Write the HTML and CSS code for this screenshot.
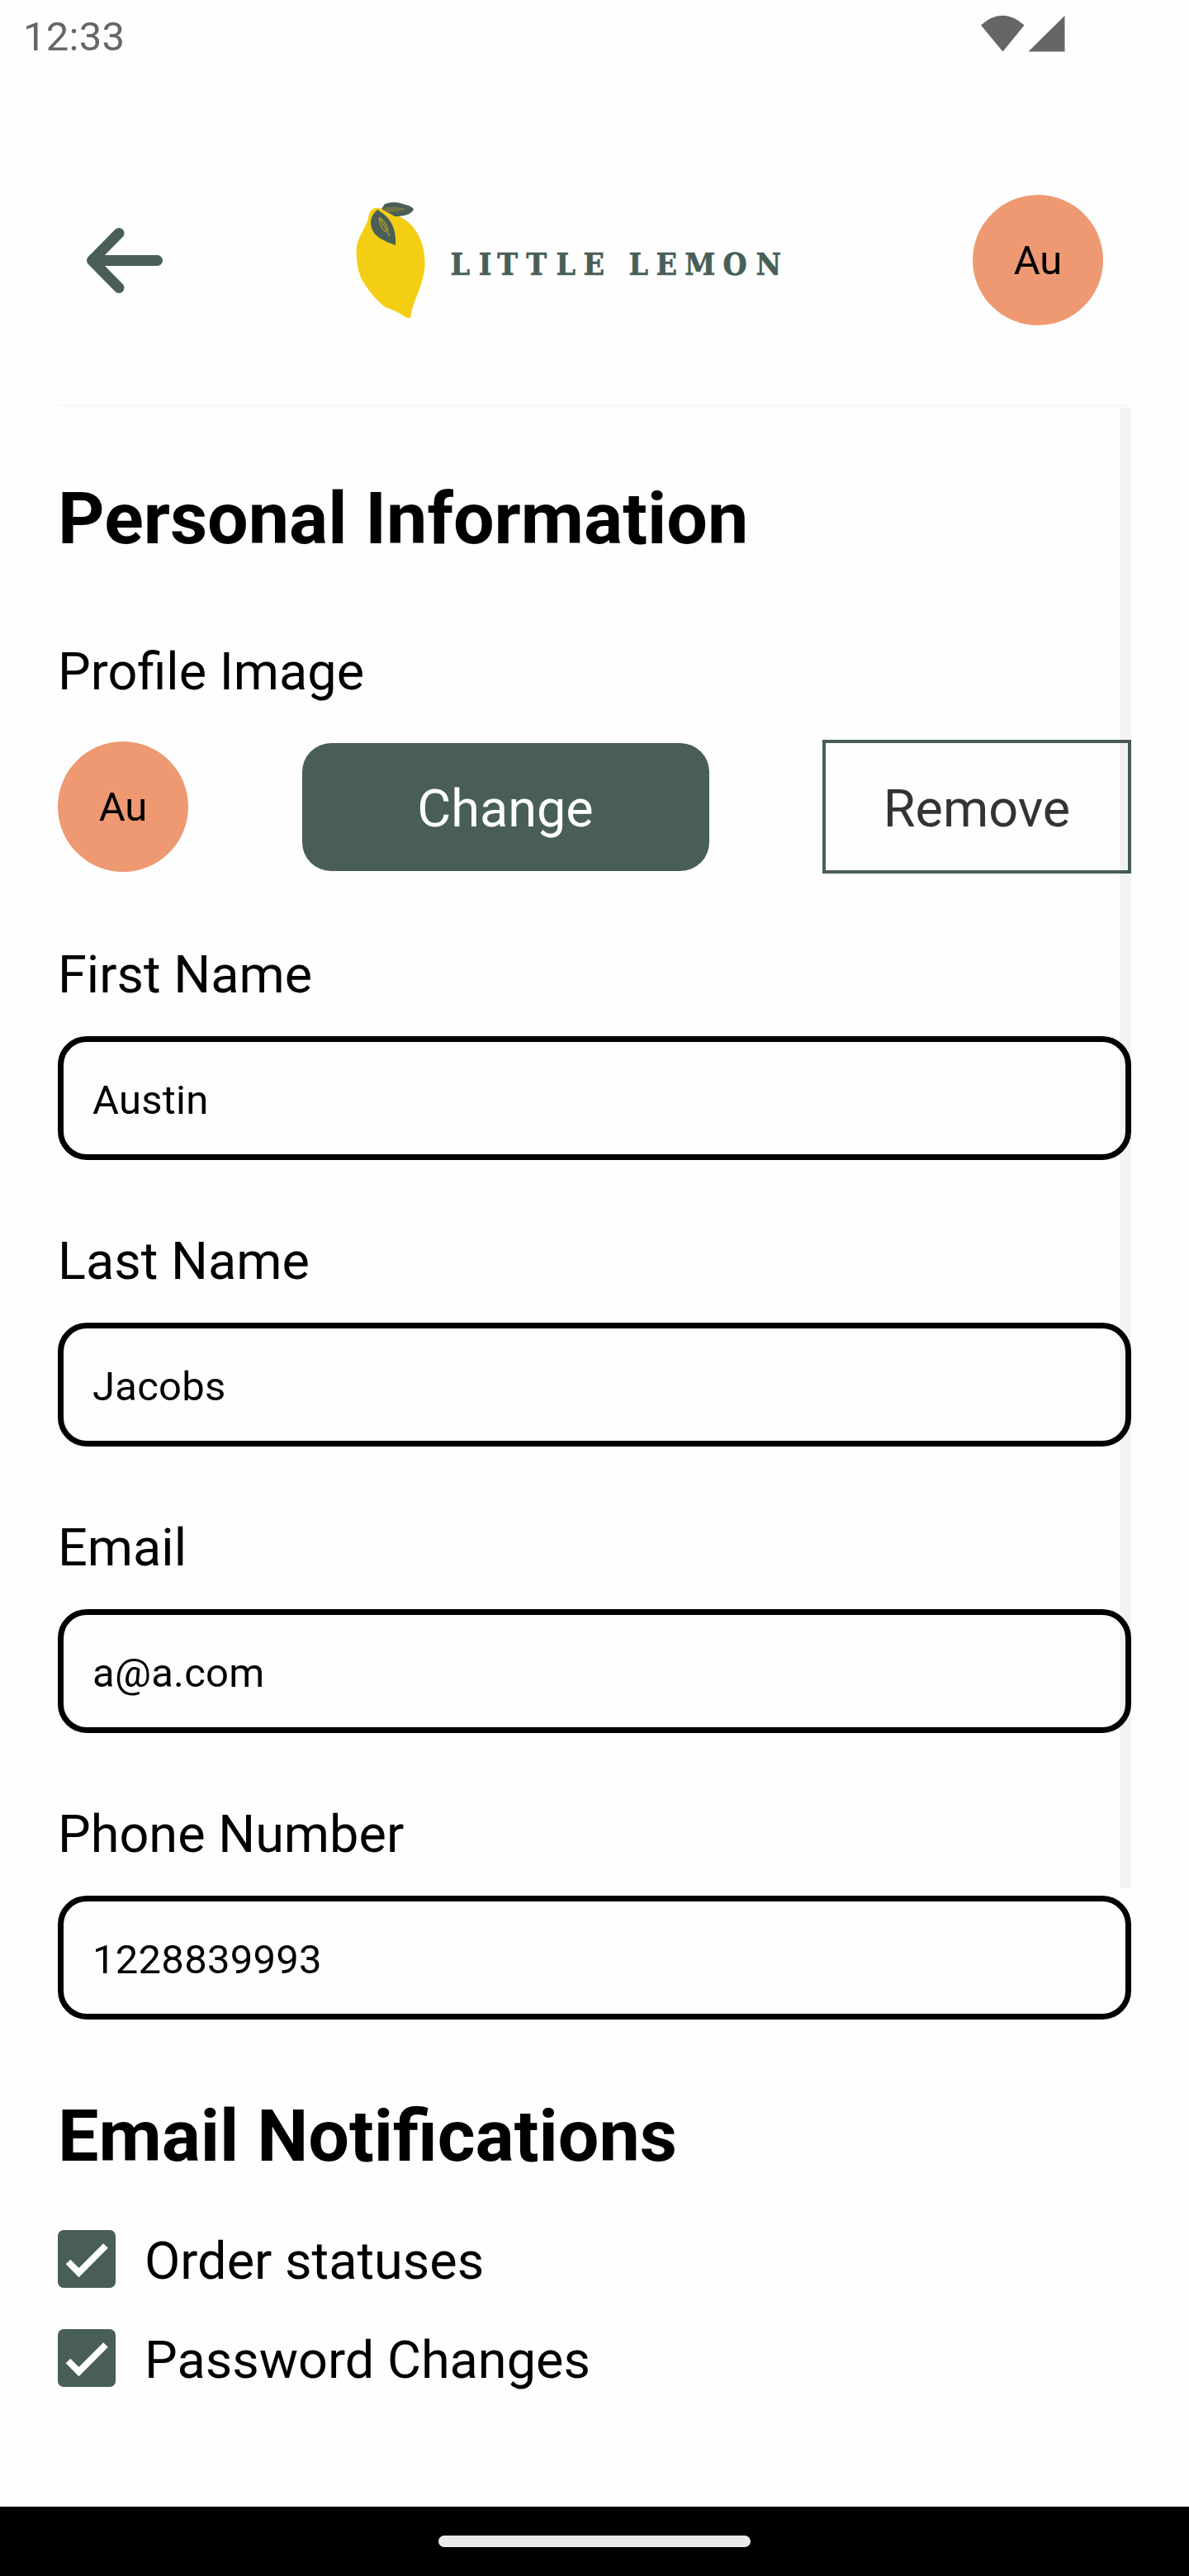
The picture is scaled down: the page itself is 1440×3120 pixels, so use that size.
FILE: index.html
```html
<!DOCTYPE html>
<html lang="en">
<head>
<meta charset="utf-8">
<title>Little Lemon - Profile</title>
<link rel="stylesheet" href="styles.css">
</head>
<body>
<div class="screen">
  <div class="status-bar">
    <span class="clock">12:33</span>
    <svg class="status-icons" width="104" height="46" viewBox="0 0 104 46">
      <path d="M1 12.5Q27 -11 53.500 12.500L27.500 44.500Z"/>
      <path d="M58.500 44.500L102.500 1V44.500Z"/>
    </svg>
  </div>

  <header class="header">
    <svg class="back" width="94" height="80" viewBox="0 0 94 80">
      <path d="M86.500 40.500H8M40 7.500L7.500 40.500L40 73.500"/>
    </svg>
    <svg class="logo" width="516" height="140" viewBox="0 0 516 140">
      <path class="lemon" d="M16 15C17 9 22 6 28 7C44 12 61 19 70 31C80 44 84 59 83.500 78C82 98 72 115 68 130L66 140H61C52 133 46 131 38 128C28 123 13 105 6 91C1 78 0 64 1 53C4 40 11 31 14 23Z"/>
      <path class="leaf" d="M35 2Q47 -2 57 2Q67 4 70 8Q67 17 47 17L31 8Z"/>
      <path class="leaf-shine" d="M31 8Q46 3 60 8Q53 12 40 12Z"/>
      <path class="leaf" d="M26 9C41 18 49 29 48 52C32 46 19 41 18 25Q18 16 26 9Z"/>
      <path class="vein" d="M28 18L41 41M29 19Q37 24 39 35M28 20Q30 32 36 36"/>
      <text class="wordmark" transform="scale(0.88 1)" y="88" x="130 169 194.500 234.500 275.500 313 350 375.500 413 452.500 505 550.500">LITTLE LEMON</text>
    </svg>
    <div class="avatar">Au</div>
  </header>

  <main class="content">
    <div class="scrollbar"></div>
    <h1 class="heading">Personal Information</h1>
    <div class="label profile-label">Profile Image</div>
    <div class="profile-row">
      <div class="avatar">Au</div>
      <button class="btn btn-change">Change</button>
      <button class="btn btn-remove">Remove</button>
    </div>
    <form class="fields">
      <div class="field"><label class="label" for="first">First Name</label><input id="first" class="input" value="Austin"></div>
      <div class="field"><label class="label" for="last">Last Name</label><input id="last" class="input" value="Jacobs"></div>
      <div class="field"><label class="label" for="email">Email</label><input id="email" class="input" value="a@a.com"></div>
      <div class="field"><label class="label" for="phone">Phone Number</label><input id="phone" class="input" value="1228839993"></div>
    </form>
    <h2 class="heading notifications">Email Notifications</h2>
    <div class="checks">
      <div class="check-row">
        <svg class="checkbox" width="70" height="70" viewBox="0 0 70 70"><rect width="70" height="70" rx="7"/><path d="M12.500 38.500L25.500 51.500L58 19"/></svg>
        <span class="check-text">Order statuses</span>
      </div>
      <div class="check-row">
        <svg class="checkbox" width="70" height="70" viewBox="0 0 70 70"><rect width="70" height="70" rx="7"/><path d="M12.500 38.500L25.500 51.500L58 19"/></svg>
        <span class="check-text">Password Changes</span>
      </div>
    </div>
  </main>

  <footer class="nav-bar"><div class="pill"></div></footer>
</div>
</body>
</html>
```
FILE: styles.css
```css
* { box-sizing: border-box; }

body {
  margin: 0;
  background: #fefefe;
  color: #000;
  font-family: Roboto, sans-serif;
}

.screen {
  display: flex;
  flex-direction: column;
  width: 1440px;
  height: 3120px;
}

.status-bar {
  display: flex;
  justify-content: space-between;
  height: 84px;
  padding: 16px 149px 0 28px;
}

.clock {
  color: #666;
  font-size: 49px;
  letter-spacing: 0.25px;
  line-height: 57px;
}

.status-icons {
  margin-top: 2px;
  fill: #666;
}

.header {
  display: flex;
  align-items: center;
  justify-content: space-between;
  height: 408px;
  margin: 0 70px;
  padding: 56px 34px 0;
  border-bottom: 2px solid #f7f7f7;
}

.back path {
  fill: none;
  stroke: #495e57;
  stroke-width: 13;
  stroke-linecap: round;
  stroke-linejoin: round;
}

.logo { margin-left: 1px; }
.lemon { fill: #f4ce14; }
.leaf { fill: #495e57; }
.leaf-shine { fill: #6f7445; }

.vein {
  fill: none;
  stroke: #a6992d;
  stroke-width: 1.5;
}

.wordmark {
  fill: #495e57;
  stroke: #495e57;
  stroke-width: 0.7;
  font-family: "DejaVu Serif", serif;
  font-size: 38px;
  font-weight: 700;
}

.avatar {
  width: 158px;
  height: 158px;
  border-radius: 50%;
  background: #ee9972;
  font-size: 49px;
  line-height: 159px;
  text-align: center;
}

.content {
  position: relative;
  flex: 1;
  padding: 84px 70px 0;
}

.scrollbar {
  position: absolute;
  top: 2px;
  right: 70px;
  width: 14px;
  height: 1793px;
  background: rgba(0, 0, 0, 0.045);
}

.heading {
  margin: 0;
  font-size: 88px;
  font-weight: 700;
  line-height: 103px;
}

.label {
  display: block;
  font-size: 63px;
  line-height: 74px;
}

.profile-label { margin-top: 98px; }

.profile-row {
  display: flex;
  align-items: center;
  justify-content: space-between;
  height: 162px;
  margin-top: 45px;
}

.btn {
  border: 0;
  font-family: inherit;
  font-size: 63px;
  line-height: 74px;
}

.btn-change {
  width: 493px;
  height: 155px;
  padding: 6px 0 0;
  border-radius: 35px;
  background: #495e57;
  color: #fff;
}

.btn-remove {
  width: 374px;
  height: 162px;
  padding: 5px 0 0;
  border: 4px solid #495e57;
  background: transparent;
  color: #333;
}

.fields {
  display: flex;
  flex-direction: column;
  gap: 86px;
  margin-top: 86px;
}

.input {
  display: block;
  width: 1300px;
  height: 150px;
  margin-top: 37px;
  padding: 5px 35px 0;
  border: 7px solid #000;
  border-radius: 35px;
  background: transparent;
  color: #000;
  font-family: inherit;
  font-size: 49px;
  letter-spacing: 0.25px;
}

.notifications { margin-top: 89px; }

.checks {
  display: flex;
  flex-direction: column;
  gap: 50px;
  margin-top: 63px;
}

.check-row {
  display: flex;
  align-items: center;
  gap: 35px;
  height: 70px;
}

.checkbox rect { fill: #495e57; }

.checkbox path {
  fill: none;
  stroke: #fff;
  stroke-width: 8;
}

.check-text {
  padding-top: 5px;
  font-size: 63px;
  line-height: 74px;
}

.nav-bar {
  display: flex;
  align-items: center;
  justify-content: center;
  height: 84px;
  background: #000;
}

.pill {
  width: 378px;
  height: 14px;
  border-radius: 7px;
  background: #ebebeb;
}
```
